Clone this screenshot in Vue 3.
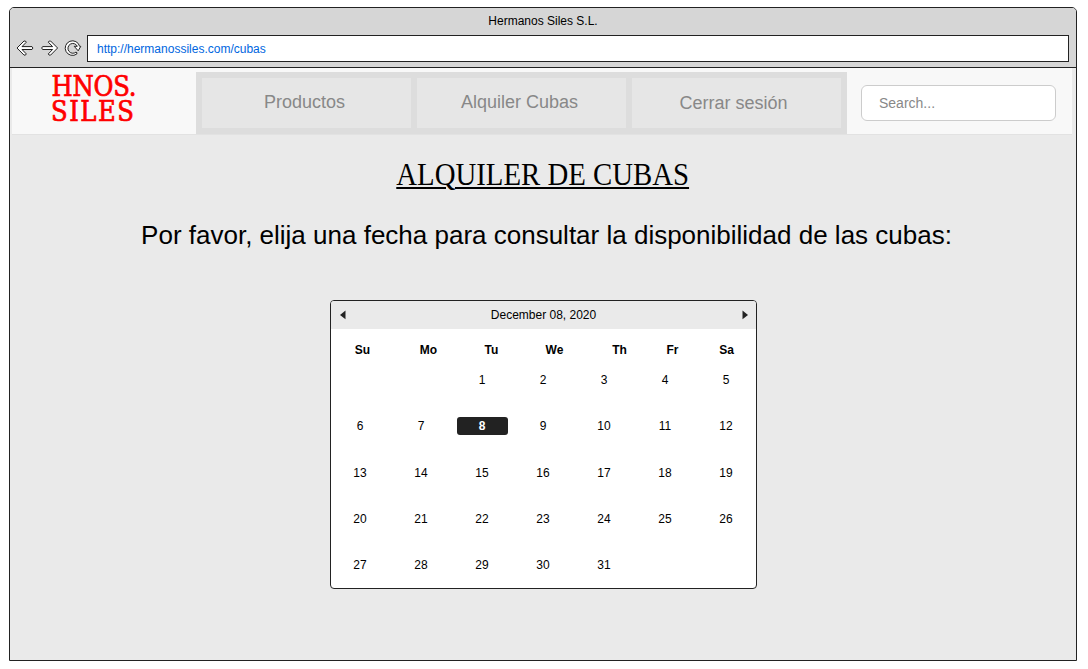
<script setup>
const links = ['Productos', 'Alquiler Cubas', 'Cerrar sesión']
const weekdays = ['Su', 'Mo', 'Tu', 'We', 'Th', 'Fr', 'Sa']
const days = [null, null, ...Array.from({ length: 31 }, (_, i) => i + 1)]
const selected = 8
</script>

<template>
  <div class="window">
    <div class="chrome">
      <div class="title">Hermanos Siles S.L.</div>
      <div class="toolbar">
        <svg class="icons" width="70" height="20" viewBox="0 0 70 20" fill="#fff" stroke="#222" stroke-width="1" stroke-linejoin="round">
          <path d="M1 10 8 3Q9.6 2.4 10.3 4.2L6 8.6H16Q17.8 10 16 11.5H6L10.3 15.9Q9.8 17.7 8 17.1Z" />
          <path d="M41.6 10 34.6 3Q33 2.4 32.3 4.2L36.6 8.6H26.6Q24.8 10 26.6 11.5H36.6L32.3 15.9Q32.8 17.7 34.6 17.1Z" />
          <path d="M63.6 8.3A7.3 7.3 0 1 0 60.7 16.1Q61.7 14.4 60 14.1A4.9 4.9 0 1 1 61.3 8.3H58.2L62.2 12.8 64.8 8.3Z" />
        </svg>
        <div class="address">http://hermanossiles.com/cubas</div>
      </div>
    </div>
    <header class="header">
      <div class="logo">
        <svg width="90" height="64" viewBox="0 0 90 64">
          <text x="0.5" y="27.5" textLength="85" lengthAdjust="spacing">HNOS.</text>
          <text x="0" y="53" textLength="83" lengthAdjust="spacing">SILES</text>
        </svg>
      </div>
      <nav class="nav">
        <a v-for="link in links" :key="link">{{ link }}</a>
      </nav>
      <input class="search" placeholder="Search..." />
    </header>
    <main class="main">
      <h1>ALQUILER DE CUBAS</h1>
      <p>Por favor, elija una fecha para consultar la disponibilidad de las cubas:</p>
      <section class="calendar">
        <div class="month">
          <svg width="6" height="10" viewBox="0 0 6 10"><path d="M5.5 .5V9.3L0 4.9Z" fill="#222" /></svg>
          <span>December 08, 2020</span>
          <svg width="6" height="10" viewBox="0 0 6 10"><path d="M.5 .5V9.3L6 4.9Z" fill="#222" /></svg>
        </div>
        <div class="weekdays">
          <b v-for="name in weekdays" :key="name">{{ name }}</b>
        </div>
        <div class="days">
          <div v-for="(day, i) in days" :key="i"><span :class="{ selected: day === selected }">{{ day }}</span></div>
        </div>
      </section>
    </main>
  </div>
</template>

<style>
body {
  background: #fff;
}
</style>

<style scoped>
* {
  box-sizing: border-box;
}
.window {
  width: 1068px;
  height: 654px;
  margin: 7px 0 0 9px;
  border: 1px solid #222;
  border-radius: 5px 5px 0 0;
  background: #eaeaea;
  overflow: hidden;
  font-family: "Liberation Sans", Arial, sans-serif;
  display: flex;
  flex-direction: column;
}
.chrome {
  height: 60px;
  flex: none;
  background: #d6d6d6;
  border-bottom: 1px solid #222;
}
.title {
  height: 27px;
  line-height: 26px;
  text-align: center;
  font-size: 12px;
  color: #000;
}
.toolbar {
  display: flex;
  padding: 0 7px 0 6px;
}
.icons {
  margin: 3px 1px 0 0;
}
.address {
  flex: 1;
  height: 27px;
  border: 1px solid #222;
  background: #fff;
  color: #0066e0;
  font-size: 12px;
  line-height: 26px;
  padding-left: 9px;
}
.header {
  width: 1060px;
  height: 67px;
  flex: none;
  margin-left: 2px;
  background: #f8f8f8;
  border-bottom: 1px solid #e2e2e2;
  display: flex;
}
.logo {
  width: 184px;
  padding-left: 39px;
}
.logo svg {
  display: block;
  overflow: visible;
}
.logo text {
  font-family: "DejaVu Serif", serif;
  font-stretch: condensed;
  font-size: 27px;
  fill: #f00;
  stroke: #f00;
  stroke-width: 0.7px;
}
.nav {
  width: 651px;
  height: 62px;
  margin-top: 4px;
  padding: 6px;
  background: #ddd;
  display: grid;
  grid-template-columns: repeat(3, 209px);
  gap: 6px;
}
.nav a {
  background: #e6e6e6;
  color: #888;
  font-size: 18px;
  line-height: 48px;
  text-align: center;
  padding-right: 4px;
}
.nav a:nth-child(3) {
  line-height: 50px;
  padding-right: 6px;
}
.search {
  width: 195px;
  height: 36px;
  margin: 17px 0 0 14px;
  padding: 0 17px;
  border: 1px solid #ccc;
  border-radius: 6px;
  background: #fff;
  font: 14px "Liberation Sans", Arial, sans-serif;
  outline: none;
}
.search::placeholder {
  color: #888;
  opacity: 1;
}
.main {
  display: flex;
  flex-direction: column;
  align-items: center;
  color: #000;
}
h1 {
  margin: 20px 0 0;
  font: 32px/38px "Liberation Serif", serif;
  text-decoration: underline;
  text-decoration-thickness: 2px;
  text-underline-offset: 2px;
  transform: scaleX(0.9);
}
p {
  margin: 25px 0 0 7px;
  font-size: 26px;
  line-height: 34px;
  white-space: nowrap;
}
.calendar {
  width: 427px;
  height: 289px;
  margin-top: 48px;
  border: 1px solid #222;
  border-radius: 4px;
  background: #fff;
  overflow: hidden;
  font-size: 12px;
}
.month {
  height: 28px;
  padding: 0 8px 0 9px;
  background: #eaeaea;
  display: flex;
  align-items: center;
  justify-content: space-between;
}
.weekdays {
  display: grid;
  grid-template-columns: 62px 70px 56px 70px 60px 46px 62px;
  height: 36px;
  margin-left: 1px;
  line-height: 42px;
  text-align: center;
}
.days {
  display: grid;
  grid-template-columns: repeat(7, 61px);
  grid-auto-rows: 46.3px;
  margin-left: -1px;
  line-height: 19px;
  text-align: center;
}
.days div {
  padding: 6px 5px 0 5px;
}
.days span {
  display: block;
}
.days .selected {
  height: 18.5px;
  margin-top: -0.8px;
  padding-top: 0.8px;
  background: #222;
  color: #fff;
  font-weight: bold;
  border-radius: 3px;
}
</style>
